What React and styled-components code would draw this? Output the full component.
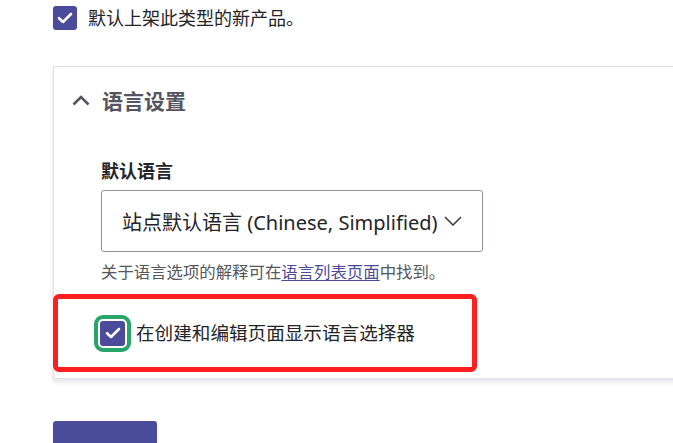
import React from 'react';
import styled, { createGlobalStyle } from 'styled-components';

const GlobalStyle = createGlobalStyle`
  html, body {
    margin: 0;
    padding: 0;
    background: #fff;
  }
  body {
    font-family: "Noto Sans", "Noto Sans CJK SC", sans-serif;
    color: #232429;
  }
`;

const Page = styled.div`
  padding: 6px 0 0 53px;
  height: 443px;
  overflow: hidden;
  box-sizing: border-box;
`;

const CheckRow = styled.label`
  display: flex;
  align-items: center;
  gap: ${(p) => p.gap || 11}px;
  font-size: ${(p) => p.size || 18}px;
  line-height: 24px;
  color: #232429;
`;

const Box = styled.span`
  flex: none;
  width: ${(p) => (p.focused ? 25 : 24)}px;
  height: ${(p) => (p.focused ? 25 : 24)}px;
  border-radius: 3px;
  background: #4a4b9a;
  display: flex;
  align-items: center;
  justify-content: center;
  outline: ${(p) => (p.focused ? '4px solid #27a56b' : 'none')};
  outline-offset: 2px;
`;

const Card = styled.section`
  margin-top: 36px;
  width: 640px;
  border: 1px solid #dedfe4;
  border-right: none;
  border-radius: 2px 0 0 2px;
  background: #fff;
  box-shadow: 0 3px 5px rgba(40, 40, 80, 0.12);
  padding-bottom: 6px;
`;

const Summary = styled.div`
  display: flex;
  align-items: center;
  gap: 12px;
  height: 66px;
  padding: 0 0 0 18px;
  font-size: 21px;
  font-weight: 700;
  color: #545560;
`;

const Body = styled.div`
  padding: 26px 0 0 47px;
`;

const Label = styled.div`
  font-size: 18px;
  font-weight: 700;
  line-height: 24px;
  margin-bottom: 7px;
  color: #232429;
`;

const Select = styled.div`
  width: 382px;
  height: 62px;
  box-sizing: border-box;
  border: 1px solid #8e929c;
  border-radius: 3px;
  display: flex;
  align-items: center;
  justify-content: space-between;
  padding: 0 20px 0 20px;
  font-size: 20px;
  color: #232429;
`;

const Help = styled.div`
  margin-top: 9px;
  font-size: 16.4px;
  line-height: 22px;
  color: #55565b;

  a {
    color: #4a4b9a;
    text-decoration: underline;
    text-underline-offset: 2px;
  }
`;

const Highlight = styled.div`
  margin: 11px 0 0 -48px;
  width: 424px;
  height: 78px;
  box-sizing: border-box;
  border: 5px solid #ff1f1f;
  border-radius: 6px;
  display: flex;
  align-items: center;
  padding-left: 42px;
`;

const Actions = styled.div`
  display: flex;
  align-items: flex-start;
  gap: 39px;
  margin-top: 42px;
`;

const Button = styled.button`
  width: 104px;
  height: 48px;
  border: none;
  border-radius: 3px;
  background: #4a4b9a;
  color: #fff;
  font: inherit;
  font-size: 18px;
  font-weight: 700;
  padding: 20px 0 0;
`;

const DangerLink = styled.a`
  color: #e11b1b;
  font-size: 18px;
  margin-top: 20px;
  text-decoration: underline;
`;

const Check = () => (
  <svg width="16" height="12" viewBox="0 0 16 12" fill="none">
    <path d="M2 6.2l4 3.8L14 2" stroke="#fff" strokeWidth="2.6" strokeLinecap="round" strokeLinejoin="round" />
  </svg>
);

const ChevronUp = () => (
  <svg width="18" height="11" viewBox="0 0 18 11" fill="none">
    <path d="M1.5 9.5L9 2l7.5 7.5" stroke="#545560" strokeWidth="2.6" />
  </svg>
);

const ChevronDown = () => (
  <svg width="18" height="10" viewBox="0 0 18 10" fill="none">
    <path d="M1 1l8 8 8-8" stroke="#3b3c44" strokeWidth="1.6" />
  </svg>
);

export default function App() {
  return (
    <Page>
      <GlobalStyle />
      <CheckRow>
        <Box>
          <Check />
        </Box>
        默认上架此类型的新产品。
      </CheckRow>

      <Card>
        <Summary>
          <ChevronUp />
          语言设置
        </Summary>
        <Body>
          <Label>默认语言</Label>
          <Select>
            <span>站点默认语言 (Chinese, Simplified)</span>
            <ChevronDown />
          </Select>
          <Help>
            关于语言选项的解释可在<a href="#languages">语言列表页面</a>中找到。
          </Help>
          <Highlight>
            <CheckRow gap={11} size={18.6}>
              <Box focused>
                <Check />
              </Box>
              在创建和编辑页面显示语言选择器
            </CheckRow>
          </Highlight>
        </Body>
      </Card>

      <Actions>
        <Button>保存内容类型</Button>
        <DangerLink href="#delete">删除内容类型</DangerLink>
      </Actions>
    </Page>
  );
}
